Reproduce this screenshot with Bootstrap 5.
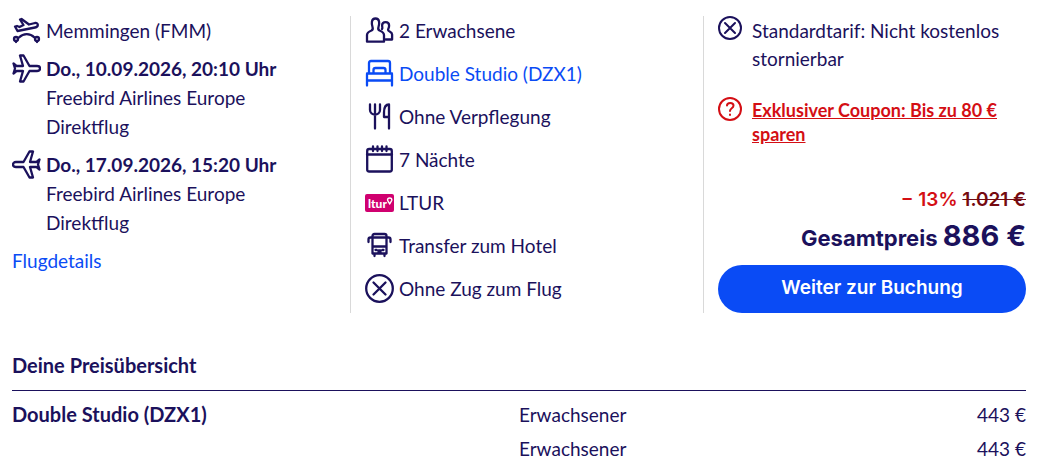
<!DOCTYPE html>
<html lang="de">
<head>
<meta charset="utf-8">
<meta name="viewport" content="width=device-width, initial-scale=1">
<title>Reiseangebot</title>
<link rel="stylesheet" href="https://cdn.jsdelivr.net/npm/bootstrap@5.3.0/dist/css/bootstrap.min.css">
<style>
  :root { --ink: #1b115c; --action: #0a4bf5; --alert: #d40e14; --rule: #d9d9d9; }
  body { font-family: Lato, sans-serif; font-size: 19px; line-height: 29px; color: var(--ink); background: #fff; }
  .page { padding: 16px 15px 0 12px; }
  .offer { display: grid; grid-template-columns: 338fr 353fr 323fr; }
  .offer-part + .offer-part { border-left: 1px solid var(--rule); padding-left: 14px; }
  .flight-list { gap: 9px; }
  .facts { gap: 14px; padding-bottom: 10px; }
  .entry { display: flex; gap: 5px; }
  .entry b { font-weight: 700; }
  .pic { flex: none; width: 29px; height: 29px; fill: none; stroke: currentColor; stroke-width: 2.3; stroke-linecap: round; stroke-linejoin: round; }
  .pic-sm { flex: none; width: 24px; height: 24px; fill: none; stroke: currentColor; stroke-width: 2; stroke-linecap: round; }
  a { color: var(--action); text-decoration: none; }
  .terms { gap: 10px; line-height: 28px; }
  .terms span { padding-top: 1px; }
  .coupon { gap: 10px; margin-top: 23px; font-size: 18px; line-height: 24px; color: var(--alert); }
  .coupon svg { margin-top: 1px; }
  .coupon a { padding-top: 2px; color: inherit; font-weight: 700; text-decoration: underline; }
  .price { font-family: Inter, sans-serif; font-weight: 600; }
  .saving { font-size: 19px; color: var(--alert); }
  .saving s { color: #750a10; }
  .total { font-size: 22px; line-height: 44px; font-weight: 700; }
  .total strong { font-size: 29px; font-weight: 700; }
  .btn-book { --bs-btn-color: #fff; --bs-btn-bg: var(--action); --bs-btn-hover-color: #fff; --bs-btn-hover-bg: #083dcc; --bs-btn-border-width: 0; height: 48px; margin-top: 5px; padding: 0 12px 3px; font: 600 19px/24px Inter, sans-serif; }
  h2 { font-size: 20px; line-height: 29px; font-weight: 700; margin: 38px 0 10px; }
  .costs { width: 100%; border-top: 1px solid var(--ink); table-layout: fixed; }
  .costs td, .costs th { height: 34px; padding: 5px 0 0; line-height: 29px; }
  .costs th { font-size: 20px; }
  .costs tr:first-child > * { padding-top: 9px; }
</style>
</head>
<body>
<main class="page">
  <section class="offer">
    <div class="offer-part flight-list d-flex flex-column">
      <div class="entry">
        <svg class="pic" viewBox="0 0 29 29" aria-hidden="true"><path d="M3 10.500l2.500 4.500L23 11.500c4-.8 3.500-5 0-4.500l-6 1.500L9.500 3 8 3.500 11.500 9l-4 2-2.500-1z"/><path d="M7 21.500c4.500-4.500 11-4.500 15.500 0"/><circle cx="4" cy="23" r="2"/><path d="M4 25v1"/><circle cx="25" cy="23" r="2"/><path d="M25 25v1"/></svg>
        <span>Memmingen (FMM)</span>
      </div>
      <div class="entry">
        <svg class="pic" viewBox="0 0 29 29" aria-hidden="true"><path d="M1.500 9.500l3 2.500H11L8 1.500h3.500L17.500 12H25c4 0 4 5 0 5h-7.500l-6 10.500H8L11 17H4.500l-3 2.500L3 14.500z"/></svg>
        <div><b>Do., 10.09.2026, 20:10 Uhr</b><br>Freebird Airlines Europe<br>Direktflug</div>
      </div>
      <div class="entry">
        <svg class="pic" viewBox="0 0 29 29" aria-hidden="true"><path d="M27.500 9.500l-3 2.500H18l3-10.500h-3.500L11.500 12H4c-4 0-4 5 0 5h7.500l6 10.500H21L18 17h6.500l3 2.500-1.500-5z"/></svg>
        <div><b>Do., 17.09.2026, 15:20 Uhr</b><br>Freebird Airlines Europe<br>Direktflug</div>
      </div>
      <div><a href="#">Flugdetails</a></div>
    </div>

    <div class="offer-part facts d-flex flex-column">
      <div class="entry">
        <svg class="pic" viewBox="0 0 29 29" aria-hidden="true"><path d="M2 25.700V19c0-2.500 2-3.500 4.500-4.500 1.500-.8 1.500-2 1-3.500C6.500 8 6 2.500 10.500 2.500S14.500 8 13.500 11c-.5 1.500-.5 2.700 1 3.500 2.500 1 4.500 2 4.500 4.500v6.700z"/><path d="M17 13c.8-1 .2-1.500.1-3.500 0-4.500 7-4.500 7 0 0 2.500-1 3-1 4.500 0 1.700 4 1.500 4 4.500v5h-6.500"/></svg>
        <span>2 Erwachsene</span>
      </div>
      <div class="entry">
        <svg class="pic" viewBox="0 0 29 29" aria-hidden="true" style="color:var(--action)"><path d="M2 26.500V15.500l2-2V4q0-2 2-2h17q2 0 2 2v9.500l2 2v11M2 21.500h25M2 14.500h25M8.500 13.500V11q0-2 2-2h8q2 0 2 2v2.500"/></svg>
        <a href="#">Double Studio (DZX1)</a>
      </div>
      <div class="entry">
        <svg class="pic" viewBox="0 0 29 29" aria-hidden="true"><path d="M5 2.500V8c0 6 10 6 10 0V2.500M10 2.500v24M24 26.500v-24c-4 0-5 4-5 8V15h5"/></svg>
        <span>Ohne Verpflegung</span>
      </div>
      <div class="entry">
        <svg class="pic" viewBox="0 0 29 29" aria-hidden="true"><rect x="2.200" y="4" width="24.600" height="22.500" rx="2"/><path d="M2 9.500h25M8 1.500V6M12.500 1.500V6M17 1.500V6M21.500 1.500V6"/></svg>
        <span>7 Nächte</span>
      </div>
      <div class="entry">
        <svg class="pic" viewBox="0 0 29 29" aria-hidden="true"><rect x="0" y="6" width="29" height="18" rx="2" fill="#d0006f" stroke="none"/><text x="3" y="20" font-family="Lato, sans-serif" font-weight="900" font-size="12" fill="#fff" stroke="none">ltur</text><path d="M24.700 16l-2-3.500c-1-3.500 5-3.500 4 0z" stroke="#fff" stroke-width="1.500"/></svg>
        <span>LTUR</span>
      </div>
      <div class="entry">
        <svg class="pic" viewBox="0 0 29 29" aria-hidden="true"><path d="M7.500 22.500V5q0-2 2-2h10q2 0 2 2v17.500zM7.500 6.500h14M7.500 15.500h14M3.500 11V8.500q0-2 2-2h2M25.500 11V8.500q0-2-2-2h-2M9.500 23v2M19.500 23v2M10.500 19h1M17.500 19h1M13.500 22v-2.500h2V22"/></svg>
        <span>Transfer zum Hotel</span>
      </div>
      <div class="entry">
        <svg class="pic" viewBox="0 0 29 29" aria-hidden="true"><circle cx="14.500" cy="14.500" r="13.300"/><path d="M8.500 8.500l12 12M20.500 8.500l-12 12"/></svg>
        <span>Ohne Zug zum Flug</span>
      </div>
    </div>

    <div class="offer-part d-flex flex-column">
      <div class="terms d-flex">
        <svg class="pic-sm" viewBox="0 0 24 24" aria-hidden="true"><circle cx="12" cy="12" r="11"/><path d="M7 7l10 10M17 7L7 17"/></svg>
        <span>Standardtarif: Nicht kostenlos stornierbar</span>
      </div>
      <div class="coupon d-flex">
        <svg class="pic-sm" viewBox="0 0 24 24" aria-hidden="true"><circle cx="12" cy="12" r="11"/><path d="M9 8.500C9 5 15.500 5 15.500 8.500c0 3-3.500 2.500-3.500 5.500M12 17.500v.5"/></svg>
        <a href="#">Exklusiver Coupon: Bis zu 80&nbsp;€ sparen</a>
      </div>
      <div class="mt-auto text-end price">
        <div class="saving">− 13% <s>1.021 €</s></div>
        <div class="total">Gesamtpreis <strong>886 €</strong></div>
      </div>
      <button type="button" class="btn btn-book rounded-pill w-100">Weiter zur Buchung</button>
    </div>
  </section>

  <section>
    <h2>Deine Preisübersicht</h2>
    <table class="costs">
      <tbody>
        <tr><th scope="row">Double Studio (DZX1)</th><td class="w-50"><div class="d-flex justify-content-between"><span>Erwachsener</span><span>443 €</span></div></td></tr>
        <tr><td></td><td><div class="d-flex justify-content-between"><span>Erwachsener</span><span>443 €</span></div></td></tr>
      </tbody>
    </table>
  </section>
</main>
<script src="https://cdn.jsdelivr.net/npm/bootstrap@5.3.0/dist/js/bootstrap.bundle.min.js"></script>
</body>
</html>
